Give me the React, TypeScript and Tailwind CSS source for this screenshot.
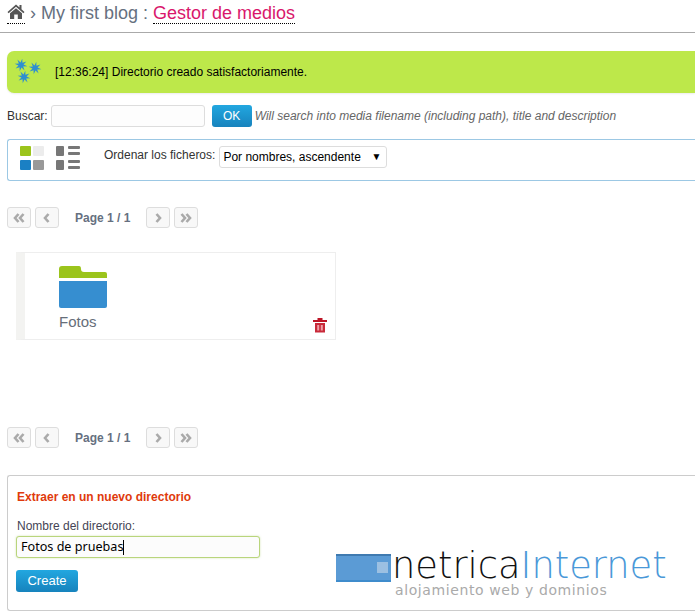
import React from "react";

const sans = "font-['Liberation_Sans',Arial,sans-serif]";

function Star({ x, y, r }: { x: number; y: number; r: number }) {
  const pts: string[] = [];
  for (let i = 0; i < 16; i++) {
    const a = (i * Math.PI) / 8 + 0.2;
    const d = i % 2 === 0 ? r : r * 0.4;
    pts.push(`${(x + d * Math.cos(a)).toFixed(2)},${(y + d * Math.sin(a)).toFixed(2)}`);
  }
  return <polygon points={pts.join(" ")} fill="#2f8fd0" />;
}

function PageBtn({ d }: { d: string }) {
  return (
    <span className="w-6 h-[21px] rounded-[3px] border border-[#ddd] bg-[#f8f8f8] flex items-center justify-center">
      <svg width="14" height="12" viewBox="0 0 14 12" fill="none" stroke="#aaa" strokeWidth="2.6">
        <path d={d} />
      </svg>
    </span>
  );
}

function Pager() {
  return (
    <div className="flex items-center h-[21px] ml-[7px]">
      <PageBtn d="M6.5 2 L3 6 L6.5 10 M11.5 2 L8 6 L11.5 10" />
      <span className="w-[4px]" />
      <PageBtn d="M8.5 2 L5 6 L8.5 10" />
      <span className="w-[75px] pl-4 text-xs font-bold text-[#667080] leading-none whitespace-nowrap">Page 1 / 1</span>
      <span className="w-[12px]" />
      <PageBtn d="M5.5 2 L9 6 L5.5 10" />
      <span className="w-[4px]" />
      <PageBtn d="M2.5 2 L6 6 L2.5 10 M7.5 2 L11 6 L7.5 10" />
    </div>
  );
}

export default function App() {
  return (
    <div className={`w-[695px] h-[616px] overflow-hidden bg-white relative ${sans}`}>
      <header className="h-[33px] border-b border-[#aaa] pl-[7px] flex items-start pt-[1px] text-lg leading-[24px] text-[#667080] whitespace-nowrap">
        <span className="border-b border-dotted border-black h-[23px] w-[18px] flex items-start pt-[3px]">
          <svg width="18" height="15" viewBox="0 0 18 15">
            <path d="M9 0.5 L0.5 8 L1.6 9.2 L9 2.8 L16.4 9.2 L17.5 8 L14.5 5.3 V1 H12.5 V3.6 Z" fill="#555" />
            <path d="M3 9.3 L9 4.2 L15 9.3 V15 H10.8 V10.5 H7.2 V15 H3 Z" fill="#555" />
          </svg>
        </span>
        <span className="ml-[5px]">›</span>
        <span className="ml-[5px]">My first blog :</span>
        <span className="ml-[5px] h-[23px] border-b border-dotted border-black text-[#d9176c]">Gestor de medios</span>
      </header>

      <div className="mt-[18px] ml-[7px] h-[42px] bg-[#bde84a] rounded-l-[7px] flex items-center shadow-[0_1px_2px_rgba(0,0,0,0.08)]">
        <svg width="28" height="26" viewBox="0 0 28 26" className="ml-[7px] shrink-0">
          <Star x={7} y={6} r={6.5} />
          <Star x={21} y={9} r={6.5} />
          <Star x={10} y={18} r={6.5} />
        </svg>
        <span className="ml-[13px] text-xs text-black">[12:36:24] Directorio creado satisfactoriamente.</span>
      </div>

      <div className="mt-[12px] ml-[7px] h-[22px] flex items-center text-xs text-[#333] whitespace-nowrap">
        <span>Buscar:</span>
        <input className="ml-[3px] w-[154px] h-[22px] rounded-[3px] border border-[#ddd] bg-[#fdfdfd]" readOnly />
        <button className="ml-[7px] w-10 h-[22px] rounded-[3px] bg-gradient-to-b from-[#22a7e0] to-[#1783bd] text-white text-xs">OK</button>
        <span className="ml-[3px] italic text-[#666]">Will search into media filename (including path), title and description</span>
      </div>

      <div className="mt-[12px] ml-[7px] h-[42px] border border-r-0 border-[#9cc8e4] rounded-l-[3px] flex items-start pl-[12px] pt-[6px]">
        <svg width="24" height="24" viewBox="0 0 24 24" className="shrink-0">
          <rect x="0" y="0" width="11" height="10" rx="1" fill="#9bc41c" />
          <rect x="13" y="0" width="11" height="10" rx="1" fill="#ececec" />
          <rect x="0" y="14" width="11" height="10" rx="1" fill="#1a80c4" />
          <rect x="13" y="14" width="11" height="10" rx="1" fill="#999" />
        </svg>
        <svg width="24" height="24" viewBox="0 0 24 24" className="ml-[12px] shrink-0">
          <rect x="0" y="0" width="8" height="10" rx="1" fill="#777" />
          <rect x="12" y="0" width="12" height="3" rx="1" fill="#777" />
          <rect x="12" y="6" width="12" height="3" rx="1" fill="#777" />
          <rect x="0" y="14" width="8" height="10" rx="1" fill="#777" />
          <rect x="12" y="14" width="12" height="3" rx="1" fill="#777" />
          <rect x="12" y="20" width="12" height="3" rx="1" fill="#777" />
        </svg>
        <span className="ml-[24px] text-xs leading-[19px] text-[#333] whitespace-nowrap">Ordenar los ficheros:</span>
        <span className="relative ml-[4px] h-[22px]">
          <select className="block appearance-none w-[168px] h-[22px] pl-[3px] rounded-[3px] border border-[#ddd] bg-white text-xs text-black">
            <option>Por nombres, ascendente</option>
          </select>
          <span className="absolute right-[6px] top-[5px] text-[10px] text-black leading-3">▼</span>
        </span>
      </div>

      <div className="mt-[26px]"><Pager /></div>

      <div className="mt-[24px] ml-[16px] w-[320px] h-[88px] border border-[#eee] border-l-[9px] border-l-[#f3f3f1] relative">
        <div className="pl-[34px] pt-[13px]">
          <svg width="48" height="43" viewBox="0 0 48 43" className="block">
            <path d="M0 16 V3 Q0 0 3 0 H20 Q22 0 22 3 Q22 6 25 6 H46 Q48 6 48 8 V12 H0 Z" fill="#9bc41c" />
            <path d="M0 15 H48 V40 Q48 42 46 42 H2 Q0 42 0 40 Z" fill="#368ed0" />
          </svg>
          <div className="mt-[5px] text-[15px] leading-4 text-[#666e7a]">Fotos</div>
        </div>
        <svg width="14" height="15" viewBox="0 0 14 15" className="absolute right-[8px] bottom-[6px]">
          <rect x="4.5" y="0" width="5" height="2" fill="#bd1526" />
          <rect x="0" y="2" width="14" height="2" fill="#bd1526" />
          <path d="M2 5 H12 V14.5 H2 Z" fill="#c92a3a" />
          <rect x="4.2" y="7" width="2" height="5.5" fill="#eda0a8" />
          <rect x="7.8" y="7" width="2" height="5.5" fill="#eda0a8" />
        </svg>
      </div>

      <div className="mt-[87px]"><Pager /></div>

      <div className="mt-[27px] ml-[7px] h-[136px] border border-r-0 border-[#ccc] rounded-l-[3px] pl-[8px] pt-[14px] relative">
        <div className="ml-px text-xs font-bold leading-[14px] text-[#e03a0c]">Extraer en un nuevo directorio</div>
        <div className="ml-px mt-[15px] text-xs leading-[14px] text-[#445]">Nombre del directorio:</div>
        <div className="mt-[3px] w-[244px] h-[22px] rounded-[3px] border border-[#b9d57c] bg-[#fcfcfc] pl-[4px] flex items-center font-['Noto_Sans',sans-serif] text-[12.6px] text-black shadow-[0_0_2px_rgba(160,200,90,0.5)]">
          <span className="whitespace-nowrap">Fotos de pruebas</span>
          <span className="w-px h-[15px] bg-black" />
        </div>
        <button className="mt-[12px] block w-[62px] h-[22px] rounded-[3px] bg-gradient-to-b from-[#22a7e0] to-[#1783bd] text-white text-[13px]">Create</button>

        <div className="absolute left-[328px] top-[69px] flex items-start">
          <div className="w-[55px] h-[28px] mt-[9px] bg-[#5b9bd5] border-t-2 border-b-2 border-t-[#3f7ab0] border-b-[#3f8ccc] relative shrink-0">
            <span className="absolute right-[3px] top-[6px] w-[11px] h-[11px] bg-[#9cc0e2]" />
          </div>
          <div className="ml-[1px] mt-[2px] whitespace-nowrap font-['DejaVu_Sans',sans-serif]">
            <div className="text-[36.8px] leading-[38px] font-extralight text-[#111]">netrica<span className="text-[#4a98d8]">Internet</span></div>
            <div className="ml-[3px] text-sm leading-[14px] tracking-[0.6px] text-[#aaa] -mt-[2px]">alojamiento web y dominios</div>
          </div>
        </div>
      </div>
    </div>
  );
}
